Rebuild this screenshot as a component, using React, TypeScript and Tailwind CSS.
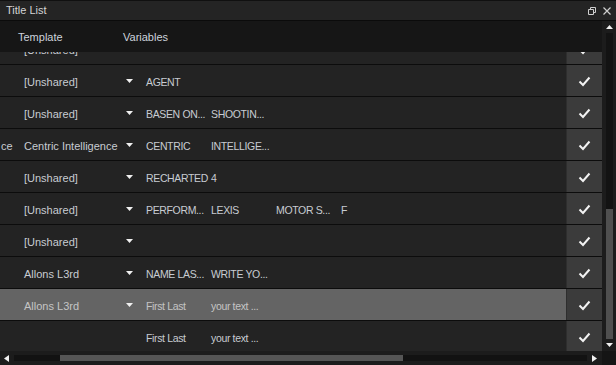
const rows = [
  { lead: "", template: "[Unshared]", arrow: true, vars: ["AGENT"] },
  { lead: "", template: "[Unshared]", arrow: true, vars: ["BASEN ON...", "SHOOTIN..."] },
  { lead: "ce", template: "Centric Intelligence", arrow: true, vars: ["CENTRIC", "INTELLIGE..."] },
  { lead: "", template: "[Unshared]", arrow: true, vars: ["RECHARTED", "4"] },
  { lead: "", template: "[Unshared]", arrow: true, vars: ["PERFORM...", "LEXIS", "MOTOR S...", "F"] },
  { lead: "", template: "[Unshared]", arrow: true, vars: [] },
  { lead: "", template: "Allons L3rd", arrow: true, vars: ["NAME LAS...", "WRITE YO..."] },
  { lead: "", template: "Allons L3rd", arrow: true, vars: ["First Last", "your text ..."], selected: true },
  { lead: "", template: "", arrow: false, vars: ["First Last", "your text ..."] },
];

const Check = () => (
  <svg width="13" height="11" viewBox="0 0 13 11">
    <path d="M1.5 5.5 L5 9 L11.5 1.5" fill="none" stroke="#f2f2f2" strokeWidth="2" />
  </svg>
);

const Arrow = () => (
  <svg width="7" height="4" viewBox="0 0 7 4">
    <path d="M0 0 H7 L3.5 4 Z" fill="#f0f0f0" />
  </svg>
);

function Row({ row, partial }: { row: (typeof rows)[number]; partial?: boolean }) {
  return (
    <div className={`flex h-[32px] shrink-0 border-b border-[#0c0c0c] ${partial ? "-mt-[19px]" : ""}`}>
      <div
        className={`flex flex-1 items-center pt-[3px] ${
          row.selected ? "bg-[#646464] text-[#c4c4c4]" : "bg-[#232323] text-[#c8ccd2]"
        }`}
      >
        <div className="w-[24px] shrink-0 pl-[1px]">{row.lead}</div>
        <div className="w-[102px] shrink-0 whitespace-nowrap">{row.template}</div>
        <div className="w-[20px] shrink-0 flex pb-[2px]">{row.arrow && <Arrow />}</div>
        {row.vars.map((v, i) => (
          <div key={i} className="w-[65px] shrink-0 whitespace-nowrap text-[10.5px] tracking-[-0.35px]">
            {v}
          </div>
        ))}
      </div>
      <div className="w-[36px] shrink-0 bg-[#3b3b3b] border-l border-[#2e2e2e] flex items-center justify-center pt-[1px]">
        <Check />
      </div>
    </div>
  );
}

export default function App() {
  return (
    <div className="w-[616px] h-[365px] bg-[#101010] flex flex-col overflow-hidden font-['Liberation_Sans',Arial,sans-serif] text-[11px] leading-none select-none">
      {/* title bar */}
      <div className="mt-px h-[19px] shrink-0 bg-[#242424] flex items-center pl-[6px] pr-[5px] text-[11px] text-[#d4d4d4]">
        <span className="flex-1">Title List</span>
        <svg width="8" height="8" viewBox="0 0 8 8" className="mr-[7px]">
          <path d="M2.5 0.5 H7.5 V5.5 H5.5 M0.5 2.5 H5.5 V7.5 H0.5 Z M2.5 0.5 V2.5" fill="none" stroke="#cfcfcf" />
        </svg>
        <svg width="8" height="8" viewBox="0 0 8 8">
          <path d="M0.5 0.5 L7.5 7.5 M7.5 0.5 L0.5 7.5" stroke="#cfcfcf" strokeWidth="1.2" />
        </svg>
      </div>
      <div className="h-px shrink-0 bg-[#0b0b0b]" />

      <div className="flex flex-1 min-h-0">
        <div className="flex flex-col flex-1 min-w-0">
          {/* header */}
          <div className="h-[31px] shrink-0 bg-[#161616] flex items-center text-[11px] text-[#cdd3dc] pt-[2px]">
            <span className="w-[123px] pl-[18px]">Template</span>
            <span>Variables</span>
          </div>
          {/* rows */}
          <div className="flex-1 min-h-0 overflow-hidden flex flex-col bg-[#232323]">
            <Row row={{ lead: "", template: "[Unshared]", arrow: true, vars: [] }} partial />
            {rows.map((r, i) => (
              <Row key={i} row={r} />
            ))}
          </div>
          {/* horizontal scrollbar */}
          <div className="h-[14px] shrink-0 bg-[#1c1c1c] flex items-center px-[4px]">
            <svg width="5" height="7" viewBox="0 0 5 7">
              <path d="M5 0 V7 L0 3.5 Z" fill="#f0f0f0" />
            </svg>
            <div className="flex-1 h-[6px] mx-[5px] bg-[#121212] flex">
              <div className="ml-[46px] w-[343px] bg-[#555555]" />
            </div>
            <svg width="5" height="7" viewBox="0 0 5 7" className="mr-[1px]">
              <path d="M0 0 V7 L5 3.5 Z" fill="#f0f0f0" />
            </svg>
          </div>
        </div>

        {/* vertical scrollbar */}
        <div className="w-[14px] shrink-0 flex flex-col">
          <div className="flex-1 bg-[#1c1c1c] flex flex-col items-center pt-[4px] pb-[4px]">
            <svg width="7" height="4" viewBox="0 0 7 4">
              <path d="M0 4 H7 L3.5 0 Z" fill="#f0f0f0" />
            </svg>
            <div className="flex-1 w-[7px] my-[4px] bg-[#131313] flex flex-col">
              <div className="mt-[176px] h-[130px] bg-[#4f4f4f]" />
            </div>
            <svg width="7" height="4" viewBox="0 0 7 4">
              <path d="M0 0 H7 L3.5 4 Z" fill="#f0f0f0" />
            </svg>
          </div>
          <div className="h-[14px] shrink-0 bg-[#151515]" />
        </div>
      </div>
    </div>
  );
}
